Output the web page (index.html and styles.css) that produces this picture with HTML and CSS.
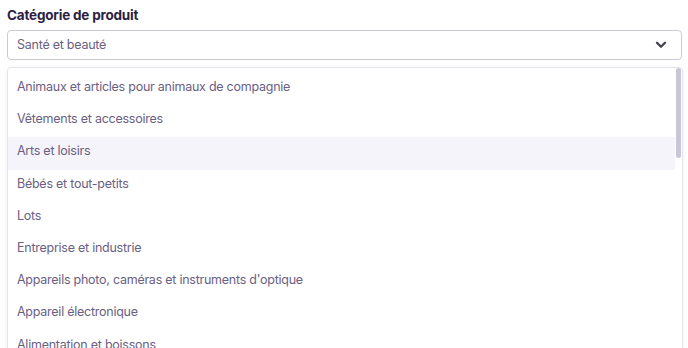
FILE: index.html
```html
<!DOCTYPE html>
<html lang="fr">
<head>
<meta charset="utf-8">
<title>Catégorie de produit</title>
<link rel="stylesheet" href="styles.css">
</head>
<body>
<div class="field">
  <label class="label">Catégorie de produit</label>
  <div class="select">
    <span class="value">Santé et beauté</span>
    <svg class="chevron" width="12" height="8" viewBox="0 0 12 8"><path d="M2 1.8 L6 5.8 L10 1.8" fill="none" stroke="#45424d" stroke-width="2.3" stroke-linecap="round" stroke-linejoin="round"/></svg>
  </div>
  <div class="dropdown">
    <ul class="options">
      <li class="option">Animaux et articles pour animaux de compagnie</li>
      <li class="option">Vêtements et accessoires</li>
      <li class="option active">Arts et loisirs</li>
      <li class="option">Bébés et tout-petits</li>
      <li class="option">Lots</li>
      <li class="option">Entreprise et industrie</li>
      <li class="option">Appareils photo, caméras et instruments d'optique</li>
      <li class="option">Appareil électronique</li>
      <li class="option">Alimentation et boissons</li>
      <li class="option">Meubles</li>
    </ul>
    <div class="thumb"></div>
  </div>
</div>
</body>
</html>
```
FILE: styles.css
```css
html, body {
  margin: 0;
  padding: 0;
  background: #ffffff;
  overflow: hidden;
  height: 348px;
}
body {
  font-family: Inter, "Noto Sans", sans-serif;
}
.field {
  padding: 5px 0 0 7px;
  width: 675px;
}
.label {
  display: block;
  font-size: 13.5px;
  letter-spacing: -0.2px;
  font-weight: 700;
  line-height: 20px;
  color: #2b1e42;
  margin-bottom: 5px;
}
.select {
  box-sizing: border-box;
  height: 30px;
  border: 1px solid #cdc9db;
  border-radius: 4px;
  display: flex;
  align-items: center;
  justify-content: space-between;
  padding: 0 14px 0 9px;
}
.value {
  font-size: 12.5px;
  letter-spacing: -0.25px;
  color: #6a6083;
  line-height: 20px;
}
.chevron {
  display: block;
}
.dropdown {
  position: relative;
  margin-top: 7px;
  width: 676px;
  box-sizing: border-box;
  border: 1px solid #e7e5ec;
  border-radius: 4px;
  box-shadow: 0 1px 4px rgba(40, 30, 60, 0.08);
  padding: 5px 7px 0 0;
  height: 320px;
}
.options {
  list-style: none;
  margin: 0;
  padding: 0;
}
.option {
  height: 32.2px;
  box-sizing: border-box;
  line-height: 28px;
  padding: 0 0 0 9px;
  font-size: 12.5px;
  letter-spacing: -0.25px;
  color: #6a6083;
  white-space: nowrap;
}
.option.active {
  background: #f5f4fa;
}
.thumb {
  position: absolute;
  top: 0;
  right: 1px;
  width: 5px;
  height: 90px;
  border-radius: 3px;
  background: #c9c6da;
}
```
